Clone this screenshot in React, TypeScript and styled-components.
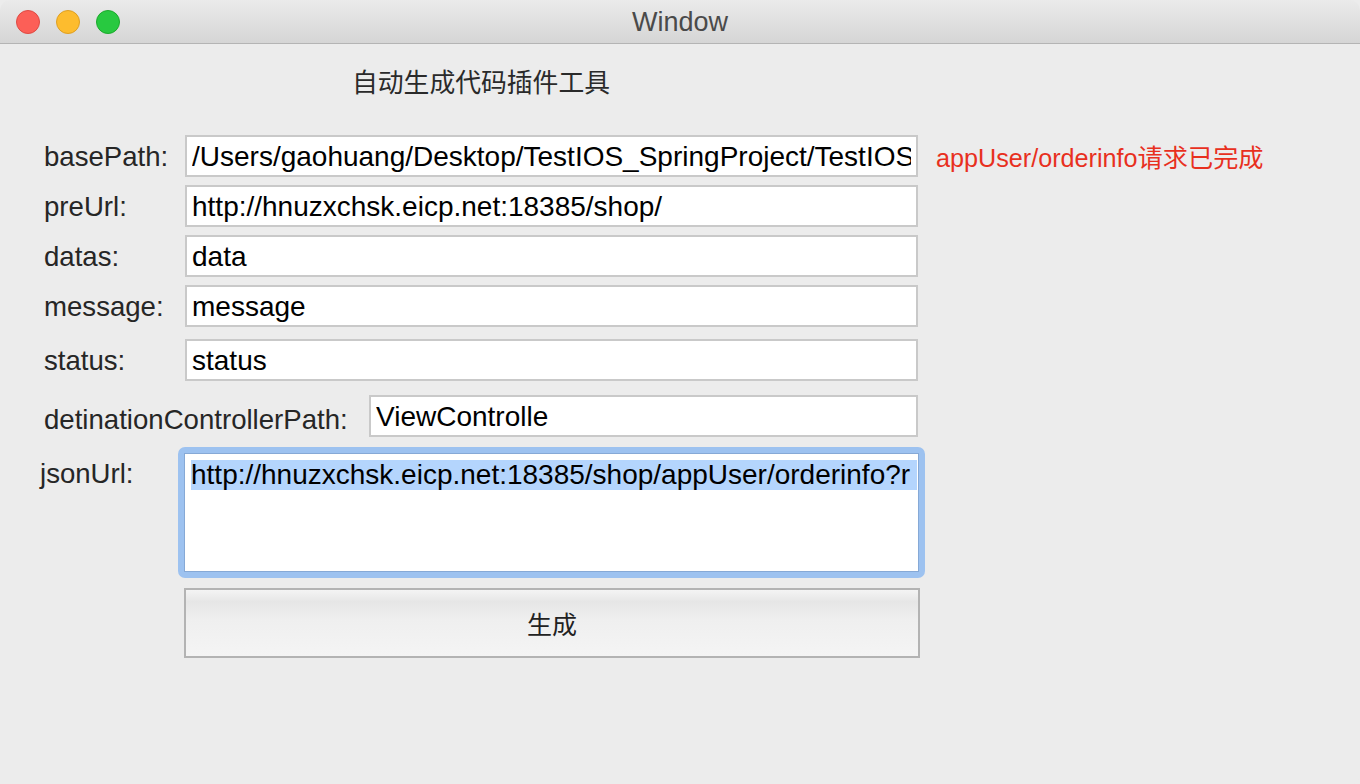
import React from "react";
import styled, { createGlobalStyle } from "styled-components";

const GlobalStyle = createGlobalStyle`
	html, body {
		margin: 0;
		padding: 0;
		background: #ececec;
	}
	body {
		font-family: "Liberation Sans", "Noto Sans CJK SC", sans-serif;
	}
`;

const fields = [
	{ label: "basePath:", value: "/Users/gaohuang/Desktop/TestIOS_SpringProject/TestIOS_SpringProject", top: 0 },
	{ label: "preUrl:", value: "http://hnuzxchsk.eicp.net:18385/shop/", top: 8 },
	{ label: "datas:", value: "data", top: 8 },
	{ label: "message:", value: "message", top: 8 },
	{ label: "status:", value: "status", top: 12 },
];

const App = () => {
	return (
		<Window>
			<GlobalStyle />
			<TitleBar>
				<Lights>
					<Light $bg="#fc5f57" $edge="#de4a43" />
					<Light $bg="#fdbc2e" $edge="#de9f22" />
					<Light $bg="#28c940" $edge="#1ca92c" />
				</Lights>
				<Title>Window</Title>
			</TitleBar>

			<Body>
				<Heading>自动生成代码插件工具</Heading>

				<Form>
					{fields.map((f, i) => (
						<Row key={f.label} $top={f.top}>
							<Label>{f.label}</Label>
							<Field readOnly value={f.value} />
							{i === 0 && <Status>appUser/orderinfo请求已完成</Status>}
						</Row>
					))}

					<Row $top={14}>
						<WideLabel>detinationControllerPath:</WideLabel>
						<Field readOnly value="ViewControlle" $width={549} />
					</Row>

					<JsonRow>
						<JsonLabel>jsonUrl:</JsonLabel>
						<FocusRing>
							<TextBox>
								<Selected>http://hnuzxchsk.eicp.net:18385/shop/appUser/orderinfo?r</Selected>
							</TextBox>
						</FocusRing>
					</JsonRow>

					<ButtonRow>
						<Generate>生成</Generate>
					</ButtonRow>
				</Form>
			</Body>
		</Window>
	);
};

export default App;

const Window = styled.div`
	width: 1360px;
	height: 784px;
	background: #ececec;
	border-radius: 10px 10px 8px 8px;
	overflow: hidden;
	display: flex;
	flex-direction: column;
`;

const TitleBar = styled.div`
	height: 43px;
	flex-shrink: 0;
	position: relative;
	display: flex;
	align-items: center;
	justify-content: center;
	background: linear-gradient(#ebebeb, #d5d5d5);
	border-bottom: 1px solid #b4b4b4;
`;

const Lights = styled.div`
	position: absolute;
	left: 16px;
	top: 10px;
	display: flex;
	gap: 16px;
`;

const Light = styled.div<{ $bg: string; $edge: string }>`
	width: 22px;
	height: 22px;
	border-radius: 50%;
	background: ${(p) => p.$bg};
	border: 1px solid ${(p) => p.$edge};
`;

const Title = styled.div`
	font-size: 27px;
	color: #4a4a4a;
	margin-top: 2px;
`;

const Body = styled.div`
	flex: 1;
	display: flex;
	flex-direction: column;
`;

const Heading = styled.div`
	padding-left: 352px;
	margin-top: 22px;
	height: 30px;
	line-height: 30px;
	font-size: 25.8px;
	color: #2a2a2a;
	font-family: "Noto Sans CJK SC", sans-serif;
`;

const Form = styled.div`
	margin-top: 39px;
	display: flex;
	flex-direction: column;
`;

const Row = styled.div<{ $top: number }>`
	display: flex;
	align-items: center;
	padding-left: 44px;
	margin-top: ${(p) => p.$top}px;
`;

const Label = styled.div`
	width: 141px;
	font-size: 27.6px;
	color: #262626;
	padding-top: 2px;
	white-space: nowrap;
`;

const WideLabel = styled(Label)`
	width: 325px;
	padding-top: 8px;
`;

const Field = styled.input<{ $width?: number }>`
	width: ${(p) => p.$width ?? 733}px;
	height: 42px;
	box-sizing: border-box;
	border: 2px solid #c9c9c9;
	background: #fff;
	padding: 2px 5px 0;
	font-family: "Liberation Sans", sans-serif;
	font-size: 28px;
	color: #000;
	outline: none;
`;

const Status = styled.div`
	margin-left: 18px;
	font-size: 25.2px;
	color: #e8301e;
	white-space: nowrap;
	font-family: "Liberation Sans", "Noto Sans CJK SC", sans-serif;
`;

const JsonRow = styled.div`
	display: flex;
	align-items: flex-start;
	padding-left: 40px;
	margin-top: 10px;
`;

const JsonLabel = styled.div`
	width: 138px;
	font-size: 27.6px;
	color: #262626;
	padding-top: 11px;
`;

const FocusRing = styled.div`
	width: 747px;
	height: 131px;
	box-sizing: border-box;
	padding: 6px;
	border-radius: 7px;
	background: #9dc2f0;
`;

const TextBox = styled.div`
	height: 100%;
	box-sizing: border-box;
	background: #fff;
	border: 1px solid #86a9d6;
	padding: 6px 1px 0 6px;
	white-space: nowrap;
	font-size: 28px;
	color: #000;
`;

const Selected = styled.div`
	background: #b4d5fd;
	line-height: 30px;
`;

const ButtonRow = styled.div`
	padding-left: 184px;
	margin-top: 10px;
`;

const Generate = styled.button`
	width: 736px;
	height: 70px;
	box-sizing: border-box;
	border: 2px solid #b3b3b3;
	background: linear-gradient(#f4f4f4 0%, #e6e6e6 18%, #efefef 45%, #f4f4f4 100%);
	font-family: "Noto Sans CJK SC", sans-serif;
	font-size: 25px;
	color: #222;
	padding: 0;
	cursor: pointer;
`;
